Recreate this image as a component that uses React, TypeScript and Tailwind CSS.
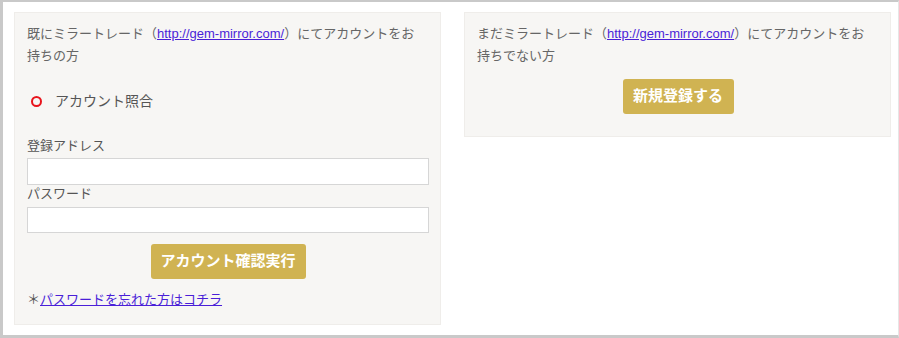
const FONT = "font-['Liberation_Sans','Noto_Sans_CJK_JP',sans-serif]";

function SiteLink(): React.ReactElement {
  return (
    <a href="#" className="text-[#4a1fd8] underline">
      http://gem-mirror.com/
    </a>
  );
}

function GoldButton({ label, width }: { label: string; width: string }): React.ReactElement {
  return (
    <button
      type="button"
      className={`${width} mx-auto flex h-[35px] items-center justify-center rounded-[3px] bg-[#d0b352] text-[15px] font-bold text-white`}
    >
      {label}
    </button>
  );
}

export default function App(): React.ReactElement {
  return (
    <div
      className={`${FONT} flex h-[338px] w-[899px] items-start gap-[23px] border-t-2 border-b-[3px] border-l-[3px] border-r border-t-[#c9c9c9] border-b-[#c9c9c9] border-l-[#c9c9c9] border-r-[#e6e6e6] bg-white pt-[10px] pl-[11px] text-[#666]`}
    >
      <section className="flex w-[427px] flex-col border border-[#efedea] bg-[#f7f6f4] pt-[10px] pr-[11px] pb-[14px] pl-[12px]">
        <p className="w-[396px] text-[13px] leading-[22px]">
          既にミラートレード（<SiteLink />）にてアカウントをお持ちの方
        </p>
        <div className="mt-[23px] flex h-[22px] items-center">
          <span className="ml-[4px] h-[11px] w-[11px] rounded-full border-2 border-[#e8141c]" />
          <span className="ml-[13px] text-[14px] text-[#555]">アカウント照合</span>
        </div>
        <label className="mt-[25px] text-[13px] leading-[18px] text-[#555]">登録アドレス</label>
        <input
          type="text"
          className="mt-[3px] h-[27px] w-full border border-[#d6d6d6] bg-white outline-none"
        />
        <label className="text-[13px] leading-[18px] text-[#555]">パスワード</label>
        <input
          type="password"
          className="mt-[4px] h-[26px] w-full border border-[#d6d6d6] bg-white outline-none"
        />
        <div className="mt-[11px]">
          <GoldButton label="アカウント確認実行" width="w-[155px]" />
        </div>
        <p className="mt-[11px] text-[13px] leading-[20px]">
          <span className="text-[#555]">＊</span>
          <a href="#" className="text-[#4a1fd8] underline">
            パスワードを忘れた方はコチラ
          </a>
        </p>
      </section>

      <section className="flex w-[427px] flex-col border border-[#efedea] bg-[#f7f6f4] pt-[10px] pr-[11px] pb-[22px] pl-[12px]">
        <p className="w-[396px] text-[13px] leading-[22px]">
          まだミラートレード（<SiteLink />）にてアカウントをお持ちでない方
        </p>
        <div className="mt-[12px]">
          <GoldButton label="新規登録する" width="w-[111px]" />
        </div>
      </section>
    </div>
  );
}
